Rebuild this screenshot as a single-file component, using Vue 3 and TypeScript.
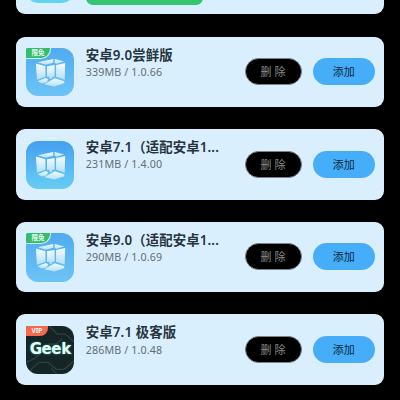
<script setup lang="ts">
interface Rom {
  title: string
  meta: string
  badge?: string
  geek?: boolean
}

const roms: Rom[] = [
  { title: '安卓9.0尝鲜版', meta: '339MB / 1.0.66', badge: '限免' },
  { title: '安卓7.1（适配安卓1...', meta: '231MB / 1.4.00' },
  { title: '安卓9.0（适配安卓1...', meta: '290MB / 1.0.69', badge: '限免' },
  { title: '安卓7.1 极客版', meta: '286MB / 1.0.48', badge: 'VIP', geek: true },
]
</script>

<template>
  <main class="screen">
    <section class="card partial">
      <div class="icon cyan"></div>
      <div class="progress"></div>
    </section>
    <section v-for="rom in roms" :key="rom.meta" class="card">
      <div class="icon" :class="{ geek: rom.geek, soft: rom.badge && !rom.geek }">
        <svg v-if="rom.geek" class="art" viewBox="0 0 48 48">
          <g fill="none" stroke="#2d4043" stroke-width="1.3">
            <path d="M23 0l8 8h8l9 8M48 6l-9-6M0 36l9-4 6-6M5 48v-5l8-7h9l8 7h8l10-9M31 48l-6-6M36 12l-6 6h-8" />
          </g>
        </svg>
        <svg v-else class="art" viewBox="0 0 48 48">
          <defs>
            <linearGradient id="pane" x1="0" y1="0" x2="0" y2="1">
              <stop offset="0" stop-color="#f4fbff" />
              <stop offset="1" stop-color="#b4e0fa" />
            </linearGradient>
          </defs>
          <g fill="url(#pane)">
            <path d="M11.6 14.2L27 10.8V14.6L19.6 16.6Z" />
            <path d="M28.4 10.8L37.8 13.4L30.4 15.6L28.4 15Z" />
            <path d="M9.8 15.4L19.3 18V28.4L10.9 31.6Z" />
            <path d="M20.8 18L28.4 16.9V28.4H26V30.4H23.2V28.4H20.8Z" />
            <path d="M29.8 16.9L38.9 14.8L38.4 31.4L29.8 28.4Z" />
            <path d="M11.4 33L19.6 29.8L22 31L20.6 34L16 35.2Z" />
            <path d="M18 36L28.6 30L38 33V35L28 38.2Z" />
          </g>
        </svg>
        <span v-if="rom.geek" class="wordmark">Geek</span>
        <span v-if="rom.badge" class="badge" :class="{ vip: rom.geek }">{{ rom.badge }}</span>
      </div>
      <div class="info">
        <div class="title">{{ rom.title }}</div>
        <div class="meta">{{ rom.meta }}</div>
      </div>
      <button class="remove">删 除</button>
      <button class="add">添加</button>
    </section>
  </main>
</template>

<style>
body {
  background: #000;
}
</style>

<style scoped>
.screen {
  box-sizing: border-box;
  width: 400px;
  height: 400px;
  overflow: hidden;
  background: #000;
  padding: 0 16px;
  display: flex;
  flex-direction: column;
  gap: 22.2px;
  font-family: "Noto Sans", "Noto Sans CJK SC", sans-serif;
}
.card {
  box-sizing: border-box;
  flex: none;
  height: 70.4px;
  border-radius: 9px;
  background: #daeffd;
  display: flex;
  align-items: flex-start;
  padding: 11.4px 9px 0 10px;
}
.partial {
  height: 14.4px;
  border-radius: 0 0 9px 9px;
  padding-top: 0;
  overflow: hidden;
  align-items: flex-end;
}
.icon {
  position: relative;
  flex: none;
  width: 48.4px;
  height: 48.4px;
  border-radius: 12px;
  overflow: hidden;
  background: linear-gradient(#45a0ef, #5fc2f3 75%, #66cdf0);
}
.icon.soft {
  background: linear-gradient(#4fabef, #6cc3f5);
}
.icon.geek {
  background: #152427;
}
.icon.cyan {
  background: #62d3ee;
  margin-bottom: 11.4px;
}
.progress {
  width: 117px;
  height: 27px;
  margin: 0 0 9.4px 11.6px;
  border-radius: 7px;
  background: #35c46f;
}
.art {
  display: block;
  width: 100%;
  height: 100%;
}
.badge {
  position: absolute;
  left: 0;
  top: 0;
  width: 25px;
  height: 11px;
  box-sizing: border-box;
  border-right: 1px solid #d4f3ee;
  border-bottom: 1px solid #d4f3ee;
  border-radius: 0 0 10px 0;
  background: #36bd6c;
  color: #e9fff1;
  font-size: 6.5px;
  font-weight: 700;
  line-height: 10px;
  text-align: center;
}
.badge.vip {
  width: 22px;
  height: 10px;
  border: 0;
  border-radius: 0 0 8px 0;
  background: #f4694b;
  color: #fff;
}
.icon:has(.badge) {
  border-top-left-radius: 2px;
}
.wordmark {
  position: absolute;
  left: 0;
  right: 0;
  top: 14.5px;
  text-align: center;
  font-family: "DejaVu Sans", sans-serif;
  font-size: 15px;
  line-height: 18px;
  font-weight: 700;
  letter-spacing: -0.4px;
  color: #e2fff8;
  text-shadow: 0 0 2px #3fb3a2;
}
.info {
  width: 148px;
  margin-left: 11.4px;
  white-space: nowrap;
}
.title {
  height: 17px;
  margin-top: -1.4px;
  font-size: 13.4px;
  line-height: 17px;
  font-weight: 600;
  letter-spacing: 0.12px;
  color: #27343e;
}
.meta {
  margin-top: 1.2px;
  font-size: 10.7px;
  line-height: 15px;
  letter-spacing: 0.12px;
  color: #626d75;
}
button {
  box-sizing: border-box;
  flex: none;
  height: 27px;
  margin: 10px 0 0;
  padding: 0;
  border: 0;
  border-radius: 14px;
  font-family: inherit;
  font-size: 11px;
  line-height: 25px;
  white-space: nowrap;
}
.remove {
  width: 57px;
  margin-left: 11.2px;
  border: 1px solid #7d8085;
  background: #000;
  color: #8a8a8a;
}
.add {
  width: 62.5px;
  margin-left: 11px;
  background: #46aef8;
  color: #0b2740;
}
</style>
